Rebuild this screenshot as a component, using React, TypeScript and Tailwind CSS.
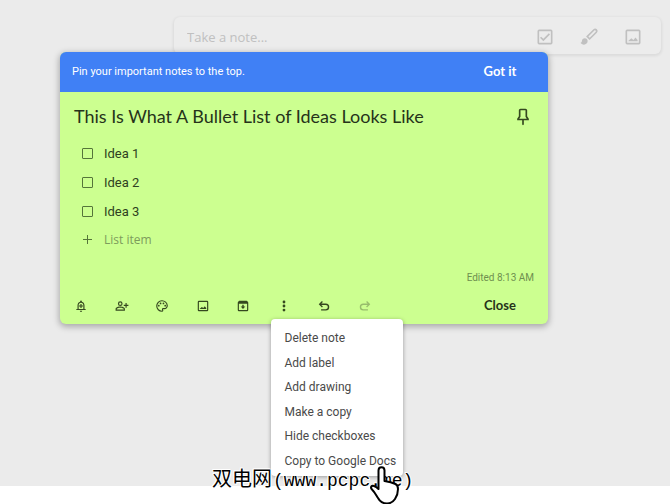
import React, { useState } from "react";

const ideas = ["Idea 1", "Idea 2", "Idea 3"];

const menuItems = [
  "Delete note",
  "Add label",
  "Add drawing",
  "Make a copy",
  "Hide checkboxes",
  "Copy to Google Docs",
];

const icons = {
  checkbox:
    "M19 3H5a2 2 0 0 0-2 2v14a2 2 0 0 0 2 2h14a2 2 0 0 0 2-2V5a2 2 0 0 0-2-2zm0 16H5V5h14v14zM18 9l-1.4-1.4-6.6 6.6-2.6-2.6L6 13l4 4z",
  brush:
    "M7 13.500c-2 0-3.500 1.500-3.500 3.300 0 1.300-1 2.200-1.800 2.200.9 1.400 2.500 2.200 4.300 2.200 2.400 0 4.400-1.800 4.400-4.300 0-1.900-1.500-3.400-3.400-3.400zM21.500 2.800a3 3 0 0 0-4.200 0L8.500 11.500l4.200 4.200 8.800-8.700a3 3 0 0 0 0-4.200zM11.300 11.500l7.200-7.200c.9-.9 2.400.6 1.500 1.500l-7.200 7.200z",
  image:
    "M19 3H5a2 2 0 0 0-2 2v14a2 2 0 0 0 2 2h14a2 2 0 0 0 2-2V5a2 2 0 0 0-2-2zm0 16H5V5h14v14zM6.500 17h11v-1.500l-2.500-3-2.500 3-2.500-2-3.500 3z",
  pin: "M17 4v7l2 3v2h-6v5l-1 1-1-1v-5H5v-2l2-3V4c0-1.100.9-2 2-2h6c1.110 0 2 .89 2 2zM9 4v7.750L7.500 14h9L15 11.750V4H9z",
  reminder:
    "M18 17v-6c0-3.070-1.630-5.640-4.500-6.320V4a1.500 1.500 0 0 0-3 0v.68C7.640 5.360 6 7.920 6 11v6H4v2h16v-2h-2zm-2 0H8v-6c0-2.480 1.510-4.500 4-4.500s4 2.020 4 4.500v6zM10 20h4a2 2 0 0 1-4 0zM11 8.500h2v2.500h2.500v2H13v2.500h-2V13H8.500v-2H11z",
  collaborator:
    "M9 12a4 4 0 1 0 0-8 4 4 0 0 0 0 8zm0-6a2 2 0 1 1 0 4 2 2 0 0 1 0-4zM9 13c-2.670 0-8 1.340-8 4v3h16v-3c0-2.660-5.330-4-8-4zm6 5H3v-1c0-.7 3-2 6-2s6 1.300 6 2v1zM18 7h2v3h3v2h-3v3h-2v-3h-3v-2h3z",
  palette:
    "M12 22a10 10 0 1 1 10-10.500c0 3.300-2.700 6-6 6h-1.800c-.3 0-.5.200-.5.500 0 .4.600.8.600 1.800A2.400 2.400 0 0 1 12 22zm0-18a8 8 0 0 0 0 16c.3 0 .4-.2.400-.5-.100-.5-.6-.8-.6-1.600a2.400 2.400 0 0 1 2.400-2.400H16c2.200 0 4-1.800 4-4C20 7.100 16.400 4 12 4z",
  archive:
    "M20.500 5.200l-1.400-1.700A1.500 1.500 0 0 0 18 3H6c-.5 0-.9.200-1.200.5L3.500 5.200C3.200 5.600 3 6 3 6.500V19a2 2 0 0 0 2 2h14a2 2 0 0 0 2-2V6.500c0-.5-.2-.9-.5-1.300zM5 19V8h14v11H5zM10.800 10h2.400v3H16l-4 4-4-4h2.800z",
  more: "M12 7.500a2.400 2.400 0 1 0 0-4.800 2.400 2.400 0 0 0 0 4.800zm0 2.100a2.400 2.400 0 1 0 0 4.800 2.400 2.400 0 0 0 0-4.800zm0 6.900a2.400 2.400 0 1 0 0 4.800 2.400 2.400 0 0 0 0-4.800z",
  undo: "M8.500 3.500L3 9l5.500 5.500 1.600-1.600-2.700-2.700H15a3.600 3.600 0 0 1 0 7.200H7v2.400h8a6 6 0 0 0 0-12H7.400l2.700-2.700z",
  redo: "M15.500 3.500L21 9l-5.500 5.500-1.600-1.600 2.700-2.700H9a3.600 3.600 0 0 0 0 7.200h8v2.400H9a6 6 0 0 1 0-12h7.600l-2.700-2.700z",
};

type IconName = keyof typeof icons;

function Icon({ name, className }: { name: IconName; className: string }) {
  return (
    <svg viewBox="0 0 24 24" className={className} fill="currentColor" aria-hidden="true">
      <path d={icons[name]} />
      {name === "palette" && (
        <>
          <circle cx="6.500" cy="11.500" r="1.500" />
          <circle cx="9.500" cy="7.500" r="1.500" />
          <circle cx="14.500" cy="7.500" r="1.500" />
          <circle cx="17.500" cy="11.500" r="1.500" />
        </>
      )}
    </svg>
  );
}

function ToolButton({ name, label, faded }: { name: IconName; label: string; faded?: boolean }) {
  return (
    <button
      aria-label={label}
      disabled={faded}
      className={`flex h-9 items-center justify-center ${faded ? "text-[#97bd6c]" : "text-[#35481f]"}`}
    >
      <Icon name={name} className="size-[14px]" />
    </button>
  );
}

function TakeNoteBar() {
  return (
    <div className="ml-[174px] mr-[9px] flex h-[37px] items-center rounded-md bg-[#ececec] pl-[13px] pr-[18px] text-[#c0c0c0] shadow-[0_1px_3px_1px_rgba(0,0,0,0.07)]">
      <input
        aria-label="Take a note"
        placeholder="Take a note..."
        className="min-w-0 flex-1 bg-transparent pt-1 font-['Open_Sans',sans-serif] text-[13px] font-medium outline-none placeholder:text-[#c0c0c0]"
      />
      <div className="flex gap-6 pt-[2px]">
        <button aria-label="New list" className="flex w-5 justify-center">
          <Icon name="checkbox" className="size-5" />
        </button>
        <button aria-label="New note with drawing" className="flex w-5 justify-center">
          <Icon name="brush" className="size-5" />
        </button>
        <button aria-label="New note with image" className="flex w-5 justify-center">
          <Icon name="image" className="size-5" />
        </button>
      </div>
    </div>
  );
}

function MoreMenu() {
  return (
    <div
      role="menu"
      className="absolute left-[7px] top-[31px] z-10 grid h-[157px] w-[132px] grid-rows-6 rounded bg-white pb-[3px] pt-[7px] shadow-[0_1px_4px_rgba(0,0,0,0.35)]"
    >
      {menuItems.map((item) => (
        <button
          key={item}
          role="menuitem"
          className="whitespace-nowrap pl-[14px] text-left text-[12px] leading-6 text-[#4a4a4a]"
        >
          {item}
        </button>
      ))}
    </div>
  );
}

function Note() {
  const [checked, setChecked] = useState<Record<string, boolean>>({});

  return (
    <section
      role="dialog"
      aria-label="Edit note"
      className="relative -mt-[2px] ml-[60px] max-w-[488px] rounded-md bg-[#ccff90] shadow-[0_2px_6px_1px_rgba(0,0,0,0.28)]"
    >
      <div className="flex h-10 items-center justify-between rounded-t-md bg-[#4080f5] pl-3 pr-2 text-white">
        <p className="text-[11px]">Pin your important notes to the top.</p>
        <button className="w-20 font-['Lato',sans-serif] text-[13px] font-bold">Got it</button>
      </div>

      <div className="flex h-[47px] items-center justify-between pl-[14px] pr-[15px] pt-[2px]">
        <h1 className="whitespace-nowrap font-['Lato',sans-serif] text-[18px] text-[#26331a]">
          This Is What A Bullet List of Ideas Looks Like
        </h1>
        <button aria-label="Pin note" className="text-[#35481f]">
          <Icon name="pin" className="size-5" />
        </button>
      </div>

      <ul>
        {ideas.map((idea) => (
          <li key={idea} className="h-[29px] pl-[22px]">
            <label className="flex h-full items-center gap-[11px] text-[13px] text-[#2f3f20]">
              <input
                type="checkbox"
                checked={!!checked[idea]}
                onChange={(e) => setChecked({ ...checked, [idea]: e.target.checked })}
                className="size-[11px] appearance-none rounded-[1px] border border-[#55753a] checked:bg-[#55753a]"
              />
              {idea}
            </label>
          </li>
        ))}
      </ul>
      <label className="flex h-[27px] items-center gap-[11px] pl-[22px]">
        <svg viewBox="0 0 11 11" className="size-[11px] text-[#55753a]" stroke="currentColor" aria-hidden="true">
          <path d="M5.500 1v9M1 5.500h9" />
        </svg>
        <input
          aria-label="List item"
          placeholder="List item"
          className="min-w-0 bg-transparent font-['Open_Sans',sans-serif] text-[12px] font-medium outline-none placeholder:text-[#7d9c5c]"
        />
      </label>

      <p className="pr-[14px] pt-4 text-right text-[10px] leading-[18px] text-[#6f8f4f]">Edited 8:13 AM</p>

      <div className="flex items-center justify-between pl-px pr-2 pt-px">
        <div className="grid w-[324px] grid-cols-8">
          <ToolButton name="reminder" label="Remind me" />
          <ToolButton name="collaborator" label="Collaborator" />
          <ToolButton name="palette" label="Change color" />
          <ToolButton name="image" label="Add image" />
          <ToolButton name="archive" label="Archive" />
          <div className="relative grid">
            <ToolButton name="more" label="More" />
            <MoreMenu />
          </div>
          <ToolButton name="undo" label="Undo" />
          <ToolButton name="redo" label="Redo" faded />
        </div>
        <button className="w-20 font-['Lato',sans-serif] text-[13px] font-bold text-[#26331a]">Close</button>
      </div>
    </section>
  );
}

function HandCursor() {
  return (
    <svg viewBox="0 0 36 40" className="absolute left-[368px] top-[465px] z-30 h-10 w-9" aria-hidden="true">
      <path
        d="M10.500 5.500c0-4.500 6-4.500 6 0V16c4 .5 8 1.500 11 3 2 1 2.500 2.500 2.500 5 0 5-1 7-3 10-2 3-5 4.500-8 4.500-4 0-7-2-9-5.500-2-3-3-5.500-6-8.500-2-2-.5-4.500 2-3.500 2 .7 3.500 2 4.500 3z"
        fill="white"
        stroke="black"
        strokeWidth="2"
        strokeLinejoin="round"
      />
    </svg>
  );
}

export default function App() {
  return (
    <div className="relative min-h-screen bg-white font-['Roboto',sans-serif]">
      <main className="bg-[#ebebeb] pb-[162px] pt-[17px]">
        <TakeNoteBar />
        <Note />
      </main>
      <p className="absolute left-[212px] top-[467px] z-20 flex items-center gap-px whitespace-nowrap font-['Liberation_Mono','Noto_Sans_CJK_SC',monospace] text-[18px] leading-7 text-black [text-shadow:1px_0_white,-1px_0_white,0_1px_white,0_-1px_white,1px_1px_white,-1px_-1px_white]">
        <span className="text-[20px]">双电网</span>
        <span>(www.pcpc.me)</span>
      </p>
      <HandCursor />
    </div>
  );
}
